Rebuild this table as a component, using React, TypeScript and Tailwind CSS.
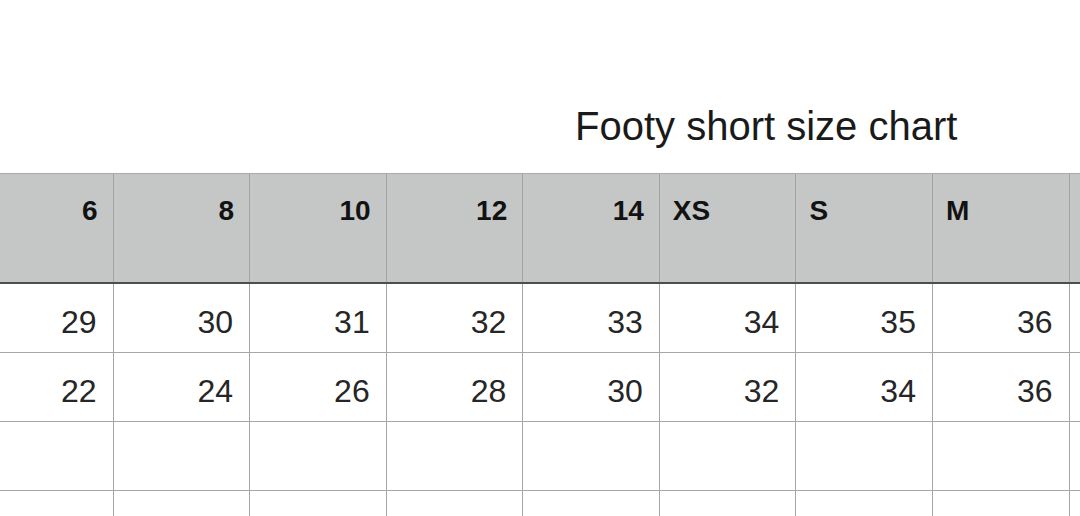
const sizes = ["6", "8", "10", "12", "14", "XS", "S", "M", ""];
const rows: string[][] = [
  ["29", "30", "31", "32", "33", "34", "35", "36", ""],
  ["22", "24", "26", "28", "30", "32", "34", "36", ""],
  ["", "", "", "", "", "", "", "", ""],
  ["", "", "", "", "", "", "", "", ""],
];

// numeric sizes sit to the right, letter sizes to the left
const isNum = (s: string) => /^\d+$/.test(s);

export default function App() {
  return (
    <div
      className="w-[1080px] h-[516px] overflow-hidden bg-white"
      style={{ fontFamily: '"Liberation Sans", Arial, sans-serif' }}
    >
      <div className="h-[173px] pt-[104px] pl-[575px] text-[40px] leading-[44px] text-[#1a1a1a]">
        Footy short size chart
      </div>

      <div className="ml-[-23px] w-[1240px]">
        {/* header row */}
        <div className="grid grid-cols-[repeat(9,136.57px)] h-[111px] bg-[#c5c7c6] border-t border-[#a9abaa] border-b-2 border-b-[#4d4d4d]">
          {sizes.map((s, i) => (
            <div
              key={i}
              className={`border-r border-[#a2a4a3] pt-[23px] text-[28px] leading-[28px] font-bold text-[#121212] ${
                isNum(s) ? "text-right pr-[15px]" : "text-left pl-[13px]"
              }`}
            >
              {s}
            </div>
          ))}
        </div>

        {/* body rows */}
        {rows.map((r, i) => (
          <div
            key={i}
            className="grid grid-cols-[repeat(9,136.57px)] h-[69px] border-b border-[#a6a6a6]"
          >
            {r.map((v, j) => (
              <div
                key={j}
                className="border-r border-[#a6a6a6] flex items-center justify-end pr-[16px] pt-[8px] text-[32px] text-[#262626]"
              >
                {v}
              </div>
            ))}
          </div>
        ))}
      </div>
    </div>
  );
}
